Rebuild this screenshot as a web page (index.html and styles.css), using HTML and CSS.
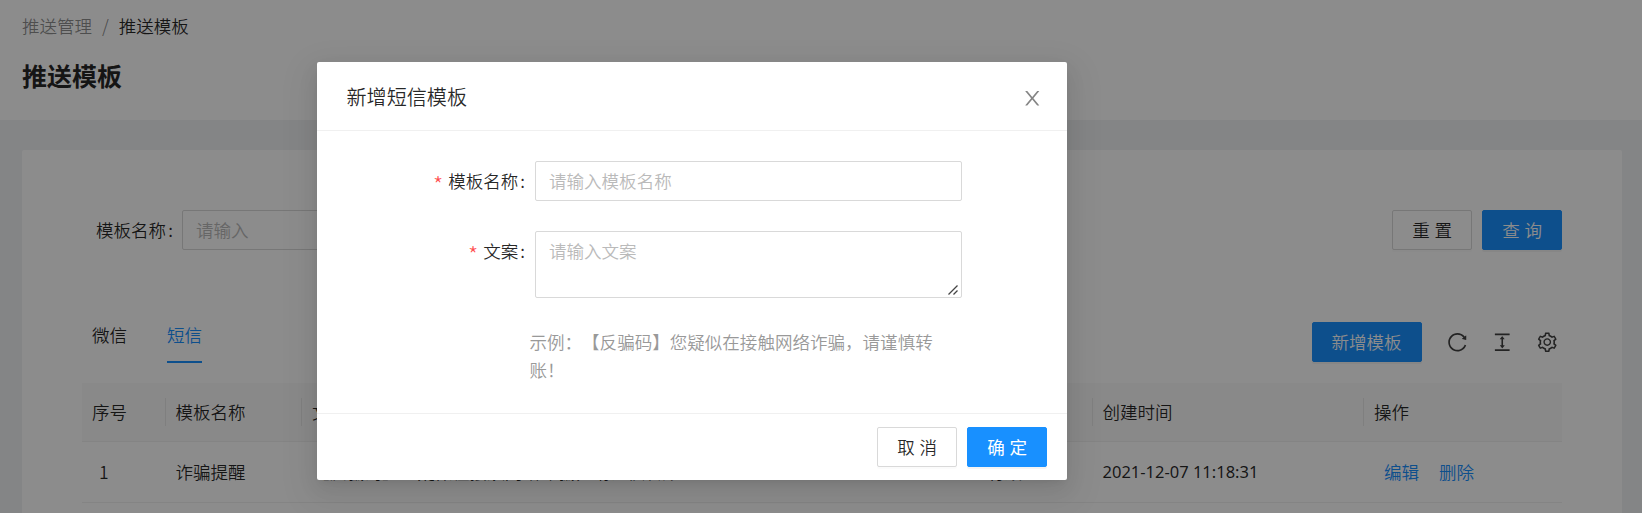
FILE: index.html
```html
<!DOCTYPE html>
<html lang="zh-CN">
<head>
<meta charset="utf-8">
<title>推送模板</title>
<link rel="stylesheet" href="styles.css">
</head>
<body>
<div class="page">
  <header class="page-header">
    <nav class="breadcrumb"><span>推送管理</span><span class="slash">/</span><span class="current">推送模板</span></nav>
    <h1 class="page-title">推送模板</h1>
  </header>
  <main class="card">
    <div class="search">
      <label class="search-label">模板名称<span class="colon">:</span></label>
      <div class="input search-input">请输入</div>
      <div class="search-actions">
        <button class="btn spaced">重置</button>
        <button class="btn primary spaced">查询</button>
      </div>
    </div>
    <div class="toolbar">
      <div class="tabs"><span class="tab">微信</span><span class="tab active">短信</span></div>
      <button class="btn primary add">新增模板</button>
      <div class="tools">
        <svg viewBox="0 0 1024 1024"><path d="M909.1 209.3l-56.4 44.1C775.8 155.1 656.2 92 521.9 92 290 92 102.3 279.5 102 511.5 101.7 743.7 289.8 932 521.9 932c181.3 0 335.8-115 394.6-276.1 1.5-4.2-.7-8.9-4.9-10.3l-56.7-19.5a8 8 0 00-10.1 4.8c-1.8 5-3.8 10-5.9 14.9-17.3 41-42.1 77.8-73.7 109.4A344.77 344.77 0 01655.9 829c-42.3 17.9-87.4 27-133.8 27-46.5 0-91.5-9.1-133.8-27A341.5 341.5 0 01279 755.2a342.16 342.16 0 01-73.7-109.4c-17.9-42.4-27-87.4-27-133.9s9.1-91.5 27-133.9c17.3-41 42.1-77.8 73.7-109.4 31.6-31.6 68.4-56.4 109.3-73.8 42.3-17.9 87.4-27 133.8-27 46.5 0 91.5 9.1 133.8 27a341.5 341.5 0 01109.3 73.8c9.9 9.9 19.2 20.4 27.8 31.4l-60.2 47a8 8 0 003 14.1l175.6 43c5 1.2 9.9-2.6 9.9-7.7l.8-180.9c-.1-6.6-7.8-10.3-13-6.2z"/></svg>
        <svg viewBox="0 0 1024 1024"><path d="M840 836H184c-4.4 0-8 3.6-8 8v60c0 4.4 3.6 8 8 8h656c4.4 0 8-3.6 8-8v-60c0-4.4-3.6-8-8-8zm0-724H184c-4.4 0-8 3.6-8 8v60c0 4.4 3.6 8 8 8h656c4.4 0 8-3.6 8-8v-60c0-4.4-3.6-8-8-8zM610.8 378c6 0 9.4-7 5.7-11.7L515.7 238.7a7.14 7.14 0 00-11.3 0L403.6 366.3a7.23 7.23 0 005.7 11.7H476v268h-62.8c-6 0-9.4 7-5.7 11.7l100.8 127.5c2.9 3.7 8.5 3.7 11.3 0l100.8-127.5c3.7-4.7.4-11.7-5.7-11.7H548V378h62.8z"/></svg>
        <svg viewBox="0 0 1024 1024"><path d="M924.8 625.7l-65.5-56c3.1-19 4.7-38.4 4.7-57.8s-1.6-38.8-4.7-57.8l65.5-56a32.03 32.03 0 009.3-35.2l-.9-2.6a443.74 443.74 0 00-79.7-137.9l-1.8-2.1a32.12 32.12 0 00-35.1-9.5l-81.3 28.9c-30-24.6-63.5-44-99.7-57.6l-15.7-85a32.05 32.05 0 00-25.8-25.7l-2.7-.5c-52.1-9.4-106.9-9.4-159 0l-2.7.5a32.05 32.05 0 00-25.8 25.7l-15.8 85.4a351.86 351.86 0 00-99 57.4l-81.9-29.1a32 32 0 00-35.1 9.5l-1.8 2.1a446.02 446.02 0 00-79.7 137.9l-.9 2.6c-4.5 12.5-.8 26.5 9.3 35.2l66.3 56.6c-3.1 18.8-4.6 38-4.6 57.1 0 19.2 1.5 38.4 4.6 57.1L99 625.5a32.03 32.03 0 00-9.3 35.2l.9 2.6c18.1 50.4 44.9 96.9 79.7 137.9l1.8 2.1a32.12 32.12 0 0035.1 9.5l81.9-29.1c29.8 24.5 63.1 43.9 99 57.4l15.8 85.4a32.05 32.05 0 0025.8 25.7l2.7.5a449.4 449.4 0 00159 0l2.7-.5a32.05 32.05 0 0025.8-25.7l15.7-85a350 350 0 0099.7-57.6l81.3 28.9a32 32 0 0035.1-9.5l1.8-2.1c34.8-41.1 61.6-87.5 79.7-137.9l.9-2.6c4.5-12.3.8-26.3-9.3-35zM788.3 465.9c2.5 15.1 3.8 30.6 3.8 46.1s-1.3 31-3.8 46.1l-6.6 40.1 74.7 63.9a370.03 370.03 0 01-42.6 73.6L721 702.8l-31.4 25.8c-23.9 19.6-50.5 35-79.3 45.8l-38.1 14.3-17.9 97a377.5 377.5 0 01-85 0l-17.9-97.2-37.8-14.5c-28.5-10.8-55-26.2-78.7-45.7l-31.4-25.9-93.4 33.2c-17-22.9-31.2-47.6-42.6-73.6l75.5-64.5-6.5-40c-2.4-14.9-3.7-30.3-3.7-45.5 0-15.3 1.2-30.6 3.7-45.5l6.5-40-75.5-64.5c11.3-26.1 25.6-50.7 42.6-73.6l93.4 33.2 31.4-25.9c23.7-19.5 50.2-34.9 78.7-45.7l37.9-14.3 17.9-97.2c28.1-3.2 56.8-3.2 85 0l17.9 97 38.1 14.3c28.7 10.8 55.4 26.2 79.3 45.8l31.4 25.8 92.8-32.9c17 22.9 31.2 47.6 42.6 73.6L781.8 426l6.5 39.9zM512 326c-97.2 0-176 78.8-176 176s78.8 176 176 176 176-78.8 176-176-78.8-176-176-176zm79.2 255.2A111.6 111.6 0 01512 614c-29.9 0-58-11.7-79.2-32.8A111.6 111.6 0 01400 502c0-29.9 11.7-58 32.8-79.2C454 401.6 482.1 390 512 390c29.9 0 58 11.6 79.2 32.8A111.6 111.6 0 01624 502c0 29.9-11.7 58-32.8 79.2z"/></svg>
      </div>
    </div>
    <div class="table">
      <div class="row head">
        <div class="cell">序号</div><div class="cell">模板名称</div><div class="cell">文案</div><div class="cell">状态</div><div class="cell">创建时间</div><div class="cell">操作</div>
      </div>
      <div class="row">
        <div class="cell index">1</div><div class="cell">诈骗提醒</div><div class="cell">【反骗码】您疑似在接触网络诈骗，请谨慎转账</div><div class="cell status">有效</div><div class="cell date">2021-12-07 11:18:31</div><div class="cell ops"><a>编辑</a><a>删除</a></div>
      </div>
    </div>
  </main>
</div>
<div class="mask"></div>
<section class="modal">
  <header class="modal-header">
    <h2 class="modal-title">新增短信模板</h2>
    <svg class="close" viewBox="0 0 1024 1024"><path d="M563.8 512l262.5-312.9c4.4-5.2.7-13.1-6.1-13.1h-79.8c-4.7 0-9.2 2.1-12.3 5.7L511.6 449.8 295.1 191.7c-3-3.6-7.5-5.7-12.3-5.7H203c-6.8 0-10.5 7.9-6.1 13.1L459.4 512 196.9 824.9A7.95 7.95 0 00203 838h79.8c4.7 0 9.2-2.1 12.3-5.7l216.5-258.1 216.5 258.1c3 3.6 7.5 5.7 12.3 5.7h79.8c6.8 0 10.5-7.9 6.1-13.1L563.8 512z"/></svg>
  </header>
  <div class="modal-body">
    <div class="field">
      <label class="field-label"><span class="star">*</span>模板名称<span class="colon">:</span></label>
      <div class="input">请输入模板名称</div>
    </div>
    <div class="field">
      <label class="field-label"><span class="star">*</span>文案<span class="colon">:</span></label>
      <div class="input area">请输入文案<svg class="grip" viewBox="0 0 10 10"><path d="M.5 9.5l9-9M5.5 9.5l4-4"/></svg></div>
    </div>
    <p class="hint">示例：【反骗码】您疑似在接触网络诈骗，请谨慎转账！</p>
  </div>
  <footer class="modal-footer">
    <button class="btn spaced">取消</button>
    <button class="btn primary spaced ok">确定</button>
  </footer>
</section>
</body>
</html>
```
FILE: styles.css
```css
* { box-sizing: border-box; }
body {
  margin: 0;
  height: 513px;
  overflow: hidden;
  position: relative;
  background: #f0f2f5;
  color: rgba(0, 0, 0, .85);
  font: 350 17.55px/27.5px "Noto Sans CJK SC", sans-serif;
  text-spacing-trim: space-all;
}
.page { height: 513px; overflow: hidden; }
.page-header { height: 120px; padding: 12px 22px; background: #fff; }
.breadcrumb { display: flex; color: rgba(0, 0, 0, .45); }
.slash { width: 26.5px; text-align: center; }
.current { color: rgba(0, 0, 0, .85); }
.page-title { margin: 15px 0 0; font-size: 25px; line-height: 40px; font-weight: 700; color: rgba(0, 0, 0, .85); }
.card { margin: 30px 20px 0 22px; height: 400px; padding: 60px 60px 0; background: #fff; border-radius: 2px; }
.search { display: flex; align-items: center; height: 40px; }
.search-label { width: 100px; padding-left: 14px; white-space: nowrap; }
.colon { margin-left: 2px; }
.input {
  height: 40px;
  padding: 5px 13px;
  border: 1px solid #d9d9d9;
  border-radius: 2px;
  color: #bababa;
}
.search-input { width: 370px; }
.search-actions { display: flex; gap: 10px; margin-left: auto; }
.btn {
  height: 40px;
  padding: 0 18.5px;
  border: 1px solid #d9d9d9;
  border-radius: 2px;
  background: #fff;
  color: rgba(0, 0, 0, .85);
  font: inherit;
  white-space: nowrap;
  box-shadow: 0 2px 0 rgba(0, 0, 0, .016);
}
.spaced { width: 80px; letter-spacing: 4.8px; padding: 0 0 0 5px; }
.primary { background: #1890ff; border-color: #1890ff; color: #fff; box-shadow: 0 2px 0 rgba(0, 0, 0, .045); }
.ok { font-weight: 400; }
.add { width: 110px; margin-left: auto; }
.toolbar { display: flex; align-items: flex-start; height: 61px; margin-top: 72px; }
.tabs { display: flex; gap: 40px; padding-left: 10px; }
.tab { width: 35px; height: 41px; line-height: 26px; white-space: nowrap; }
.active { color: #1890ff; border-bottom: 2px solid #1890ff; }
.tools { display: flex; gap: 22.5px; padding: 9px 4px 0 24px; }
.tools svg { width: 22.5px; height: 22.5px; fill: rgba(0, 0, 0, .75); }
.row {
  display: grid;
  grid-template-columns: 83.5px 136.5px 666px 124.5px 271.5px 198px;
  align-items: center;
  height: 61px;
  border-bottom: 1px solid #f0f0f0;
}
.head { height: 59px; background: #fafafa; }
.cell { padding-left: 10px; line-height: 28px; white-space: nowrap; }
.head .cell + .cell { position: relative; }
.head .cell + .cell::before { content: ""; position: absolute; left: -1px; top: 0; width: 1px; height: 28px; background: #e8e8e8; }
.index { padding-left: 17px; }
.status { padding-left: 19px; }
.date { font-family: "Noto Sans", sans-serif; font-size: 16.5px; font-weight: 400; }
.ops { display: flex; gap: 20px; padding-left: 20px; color: #1890ff; }
.mask { position: absolute; inset: 0; background: rgba(0, 0, 0, .45); }
.modal {
  position: absolute;
  left: 317px;
  top: 62px;
  width: 750px;
  height: 418px;
  display: flex;
  flex-direction: column;
  background: #fff;
  border-radius: 2px;
  box-shadow: 0 4px 8px -5px rgba(0, 0, 0, .12), 0 8px 20px rgba(0, 0, 0, .08), 0 12px 35px 10px rgba(0, 0, 0, .05);
}
.modal-header { display: flex; align-items: center; justify-content: space-between; height: 69px; padding: 2px 24px 0 29.5px; border-bottom: 1px solid #f0f0f0; }
.modal-title { margin: 0; font-size: 20.1px; font-weight: 350; }
.close { width: 22.5px; height: 22.5px; margin-top: 2px; fill: #858585; }
.modal-body { flex: 1; padding-top: 30px; }
.field { display: grid; grid-template-columns: 218px 427px; margin-bottom: 30px; }
.field-label { padding: 6px 10px 0 0; text-align: right; white-space: nowrap; }
.star { display: inline-block; height: 20px; margin-right: 5px; color: #ff4d4f; font-size: 23px; font-weight: 300; line-height: 35px; vertical-align: top; }
.area { position: relative; height: 67px; }
.grip { position: absolute; right: 3px; bottom: 2px; width: 10px; height: 10px; fill: none; stroke: #444; stroke-width: 1.3; }
.hint { width: 420px; margin: 0 0 0 212.5px; color: #999; line-height: 28px; }
.modal-footer { display: flex; justify-content: flex-end; gap: 10px; height: 67px; padding: 13px 20px 0; border-top: 1px solid #f0f0f0; }
```
